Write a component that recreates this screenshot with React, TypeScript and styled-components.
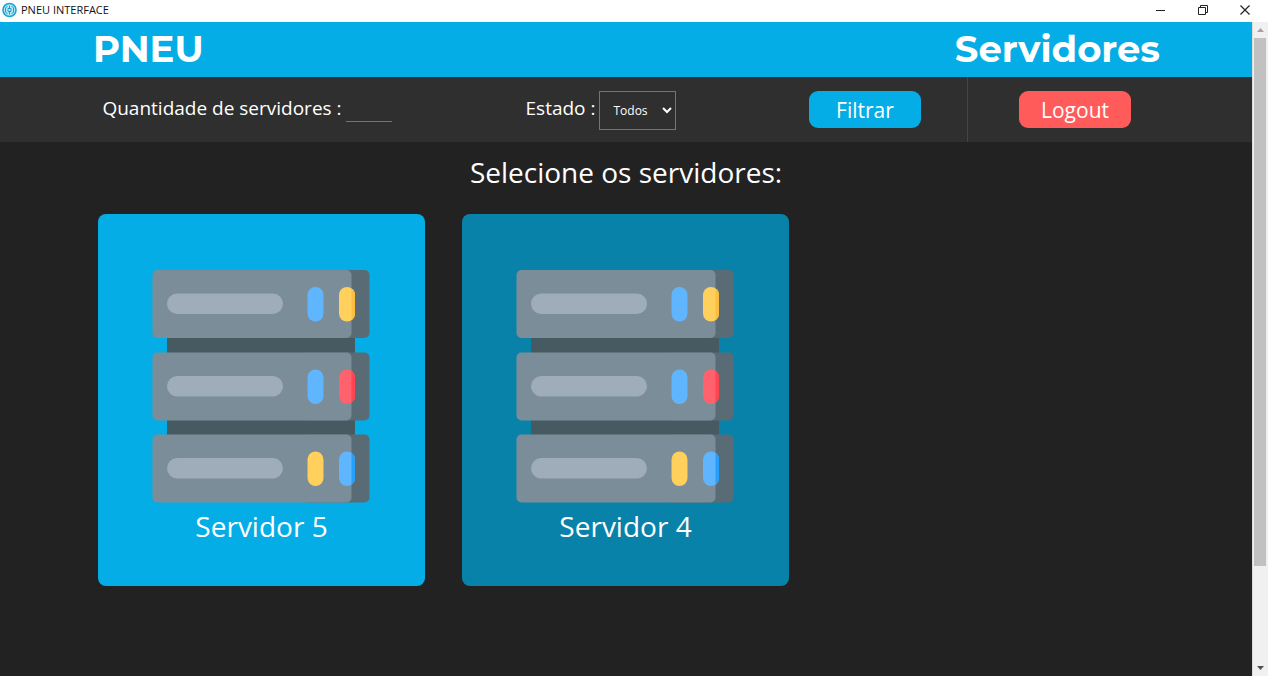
import React from "react";
import styled, { createGlobalStyle } from "styled-components";

const GlobalStyle = createGlobalStyle`
  * { box-sizing: border-box; }
  body {
    margin: 0;
    background: #222222;
    color: #ffffff;
    font-family: "Open Sans", "Noto Sans", sans-serif;
  }
  button, input, select { font-family: inherit; color: inherit; }
`;

const Window = styled.div`
  display: flex;
  flex-direction: column;
  height: 100vh;
`;

const TitleBar = styled.div`
  display: flex;
  flex: none;
  align-items: center;
  height: 22px;
  padding: 0 2px 2px;
  background: #ffffff;
  color: #111111;
`;

const WindowTitle = styled.span`
  flex: 1;
  margin-left: 4px;
  font-size: 11px;
  line-height: 20px;
`;

const WindowButton = styled.button`
  display: flex;
  align-items: center;
  justify-content: center;
  width: 42px;
  height: 20px;
  padding: 0;
  border: 0;
  background: none;
`;

const Viewport = styled.div`
  display: flex;
  flex: 1;
  min-height: 0;
`;

const Page = styled.div`
  flex: 1;
  min-width: 0;
  overflow: hidden;
`;

const Header = styled.header`
  display: flex;
  align-items: flex-start;
  justify-content: space-between;
  height: 55px;
  padding: 0 92px 0 93px;
  background: #04ade5;
`;

const Brand = styled.h1`
  margin: 0;
  font-family: Montserrat, Inter, sans-serif;
  font-size: 37px;
  font-weight: 700;
  line-height: 53px;
`;

const Toolbar = styled.div`
  display: grid;
  grid-template-columns: 967fr 285fr;
  height: 65px;
  background: #2f2f2f;
`;

const Filters = styled.form`
  display: grid;
  grid-template-columns: 384fr 324fr 204fr;
  padding: 14px 0 0 55px;
`;

const Field = styled.div`
  display: flex;
  gap: 4px;
  align-items: flex-start;
  justify-content: center;
`;

const Label = styled.label`
  font-size: 19px;
  line-height: 34px;
  white-space: nowrap;
`;

const CountInput = styled.input`
  width: 46px;
  height: 31px;
  padding: 0;
  border: 0;
  border-bottom: 1px solid #0c9acb;
  border-radius: 0;
  background: transparent;
  font-size: 16px;
  text-align: center;
`;

const StateSelect = styled.select`
  width: 77px;
  height: 39px;
  padding: 0 0 0 9px;
  border: 1px solid #0c9acb;
  border-radius: 0;
  background: #2f2f2f;
  font-size: 12px;
`;

const Session = styled.div`
  display: flex;
  justify-content: center;
  padding: 14px 70px 0 0;
  border-left: 1px solid #444444;
`;

const Action = styled.button<{ $color: string }>`
  width: 112px;
  height: 37px;
  padding: 2px 0 0;
  border: 0;
  border-radius: 9px;
  background: ${(p) => p.$color};
  font-size: 21px;
  line-height: 35px;
`;

const Prompt = styled.h2`
  margin: 0;
  padding: 9px 0 21px;
  font-size: 28px;
  font-weight: 400;
  line-height: 42px;
  text-align: center;
`;

const ServerGrid = styled.main`
  display: grid;
  grid-template-columns: repeat(3, 1fr);
  gap: 37px;
  padding: 0 99px 37px 98px;
`;

const ServerCard = styled.button<{ $selected: boolean }>`
  display: flex;
  flex-direction: column;
  align-items: center;
  height: 372px;
  padding: 56px 0 0;
  border: 0;
  border-radius: 8px;
  background: ${(p) => (p.$selected ? "#04ade5" : "#0982a9")};
  font-size: 28px;
  line-height: 46px;
`;

const ScrollTrack = styled.div`
  display: flex;
  flex: none;
  flex-direction: column;
  width: 16px;
  padding: 0 2px 0 1px;
  border-left: 1px solid #dcdcdc;
  background: #f0f0f0;
`;

const ScrollArrow = styled.button`
  display: flex;
  flex: none;
  align-items: center;
  justify-content: center;
  height: 16px;
  padding: 0;
  border: 0;
  background: none;
`;

const ScrollThumb = styled.div`
  flex: 528;
  background: #c1c1c1;
`;

const ScrollRest = styled.div`
  flex: 94;
`;

const UNITS = [
  { y: 0, left: "#60b5ff", right: "#ffd05b", edge: "#fdbd40" },
  { y: 82.5, left: "#60b5ff", right: "#ff616d", edge: "#ff4551" },
  { y: 164.5, left: "#ffd05b", right: "#60b5ff", edge: "#26a0fc" },
];

function ServerIcon() {
  return (
    <svg width="220" height="233" viewBox="0 0 220 233" aria-hidden="true">
      <path d="M15 60H203V172H15Z" fill="#465a61" />
      {UNITS.map((u) => (
        <g key={u.y} transform={`translate(0 ${u.y})`}>
          <rect x="150" width="67.5" height="68" rx="5" fill="#596c76" />
          <rect x="0.5" width="199" height="68" rx="5" fill="#7b8d98" />
          <rect x="15" y="23.5" width="116" height="20.5" rx="10.2" fill="#9facba" />
          <rect x="155.5" y="17" width="16" height="34.5" rx="8" fill={u.left} />
          <rect x="187" y="17" width="16" height="34.5" rx="8" fill={u.right} />
          <path d="M199.500 18.400A8 8 0 0 1 203 25V43.500A8 8 0 0 1 199.500 50.100Z" fill={u.edge} />
        </g>
      ))}
    </svg>
  );
}

function AppIcon() {
  return (
    <svg width="15" height="16" viewBox="0 0 15 16" aria-hidden="true">
      <circle cx="7.500" cy="8" r="6.500" fill="#b9e8f8" stroke="#16a5d5" strokeWidth="1.600" />
      <path d="M5.500 4L3.500 6V10L5.500 12M9.500 4L11.500 6V10L9.500 12M7.500 3.500V6M7.500 10V12.500M6 6.500H9V9.500H6Z" fill="none" stroke="#229fc9" strokeWidth="1" />
    </svg>
  );
}

const SERVERS = [
  { name: "Servidor 5", selected: true },
  { name: "Servidor 4", selected: false },
];

export default function App() {
  return (
    <Window>
      <GlobalStyle />
      <TitleBar>
        <AppIcon />
        <WindowTitle>PNEU INTERFACE</WindowTitle>
        <WindowButton aria-label="Minimizar">
          <svg width="10" height="10" viewBox="0 0 10 10">
            <path d="M0 5.500H9" stroke="#222" />
          </svg>
        </WindowButton>
        <WindowButton aria-label="Restaurar">
          <svg width="10" height="10" viewBox="0 0 10 10" fill="none" stroke="#222">
            <path d="M0.500 2.500H7.500V9.500H0.500ZM2.500 2.500V0.500H9.500V7.500H7.500" />
          </svg>
        </WindowButton>
        <WindowButton aria-label="Fechar">
          <svg width="10" height="10" viewBox="0 0 10 10">
            <path d="M0.500 0.500L9.500 9.500M9.500 0.500L0.500 9.500" stroke="#222" strokeWidth="1.200" />
          </svg>
        </WindowButton>
      </TitleBar>
      <Viewport>
        <Page>
          <Header>
            <Brand>PNEU</Brand>
            <Brand as="span">Servidores</Brand>
          </Header>
          <Toolbar>
            <Filters onSubmit={(e) => e.preventDefault()}>
              <Field>
                <Label htmlFor="quantidade">Quantidade de servidores :</Label>
                <CountInput id="quantidade" type="text" />
              </Field>
              <Field>
                <Label htmlFor="estado">Estado :</Label>
                <StateSelect id="estado">
                  <option>Todos</option>
                </StateSelect>
              </Field>
              <Field>
                <Action type="submit" $color="#04ade5">Filtrar</Action>
              </Field>
            </Filters>
            <Session>
              <Action type="button" $color="#ff5b5b">Logout</Action>
            </Session>
          </Toolbar>
          <Prompt>Selecione os servidores:</Prompt>
          <ServerGrid>
            {SERVERS.map((s) => (
              <ServerCard key={s.name} type="button" $selected={s.selected} aria-pressed={s.selected}>
                <ServerIcon />
                {s.name}
              </ServerCard>
            ))}
          </ServerGrid>
        </Page>
        <ScrollTrack>
          <ScrollArrow aria-label="Rolar para cima">
            <svg width="7" height="4" viewBox="0 0 7 4"><path d="M0 4L3.500 0L7 4Z" fill="#a3a3a3" /></svg>
          </ScrollArrow>
          <ScrollThumb />
          <ScrollRest />
          <ScrollArrow aria-label="Rolar para baixo">
            <svg width="7" height="4" viewBox="0 0 7 4"><path d="M0 0L3.500 4L7 0Z" fill="#505050" /></svg>
          </ScrollArrow>
        </ScrollTrack>
      </Viewport>
    </Window>
  );
}
